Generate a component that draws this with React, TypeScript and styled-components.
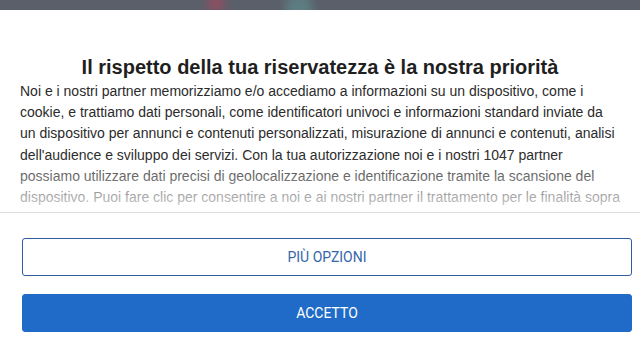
import React from "react";
import styled, { createGlobalStyle } from "styled-components";

const Global = createGlobalStyle`
  html, body { margin: 0; padding: 0; background: #ffffff; }
  body { font-family: "Liberation Sans", Arial, sans-serif; overflow: hidden; }
  * { box-sizing: border-box; }
`;

const Page = styled.div`
  width: 640px;
  height: 360px;
  display: flex;
  flex-direction: column;
  background: #ffffff;
`;

const Backdrop = styled.div`
  position: relative;
  height: 10px;
  flex: none;
  background: #5a5f6a;
  overflow: hidden;
`;

const Blob = styled.div<{ $x: number; $c: string; $s: number }>`
  position: absolute;
  top: -6px;
  left: ${(p) => p.$x}px;
  width: ${(p) => p.$s}px;
  height: ${(p) => p.$s}px;
  border-radius: 50%;
  background: ${(p) => p.$c};
  filter: blur(5px);
  opacity: 0.7;
`;

const Dialog = styled.div`
  flex: 1;
  display: flex;
  flex-direction: column;
`;

const Title = styled.h1`
  margin: 45px 0 0;
  text-align: center;
  font-family: "Liberation Sans", Arial, sans-serif;
  font-size: 20px;
  line-height: 24px;
  font-weight: 700;
  color: #1f1f1f;
`;

const TextArea = styled.div`
  position: relative;
  height: 134px;
  padding: 0 20px;
  overflow: hidden;
  border-bottom: 1px solid #dedede;
  &::after {
    content: "";
    position: absolute;
    left: 0;
    right: 0;
    bottom: 0;
    height: 56px;
    background: linear-gradient(rgba(255,255,255,0), rgba(255,255,255,0.82));
  }
`;

const Body = styled.p`
  margin: 2px 0 0;
  font-size: 14px;
  line-height: 21.2px;
  color: #2b2b2b;
`;

const Actions = styled.div`
  display: flex;
  flex-direction: column;
  gap: 18px;
  padding: 25px 8px 0 22px;
`;

const Button = styled.button<{ $primary?: boolean }>`
  height: 38px;
  width: 100%;
  border-radius: 3px;
  font-family: Roboto, "Liberation Sans", sans-serif;
  font-size: 14px;
  letter-spacing: 0;
  cursor: pointer;
  border: 1px solid ${(p) => (p.$primary ? "#1f6bc7" : "#2f5d9f")};
  background: ${(p) => (p.$primary ? "#1f6bc7" : "#ffffff")};
  color: ${(p) => (p.$primary ? "#ffffff" : "#3567a8")};
`;

export default function App() {
  return (
    <>
      <Global />
      <Page>
        <Backdrop>
          <Blob $x={207} $c="#a8475f" $s={18} />
          <Blob $x={285} $c="#5f8a8c" $s={28} />
        </Backdrop>
        <Dialog>
          <Title>Il rispetto della tua riservatezza è la nostra priorità</Title>
          <TextArea>
            <Body>
              Noi e i nostri partner memorizziamo e/o accediamo a informazioni su un dispositivo, come i
              cookie, e trattiamo dati personali, come identificatori univoci e informazioni standard inviate da
              un dispositivo per annunci e contenuti personalizzati, misurazione di annunci e contenuti, analisi
              dell'audience e sviluppo dei servizi. Con la tua autorizzazione noi e i nostri 1047 partner
              possiamo utilizzare dati precisi di geolocalizzazione e identificazione tramite la scansione del
              dispositivo. Puoi fare clic per consentire a noi e ai nostri partner il trattamento per le finalità sopra
              descritte.
            </Body>
          </TextArea>
          <Actions>
            <Button>PIÙ OPZIONI</Button>
            <Button $primary>ACCETTO</Button>
          </Actions>
        </Dialog>
      </Page>
    </>
  );
}
